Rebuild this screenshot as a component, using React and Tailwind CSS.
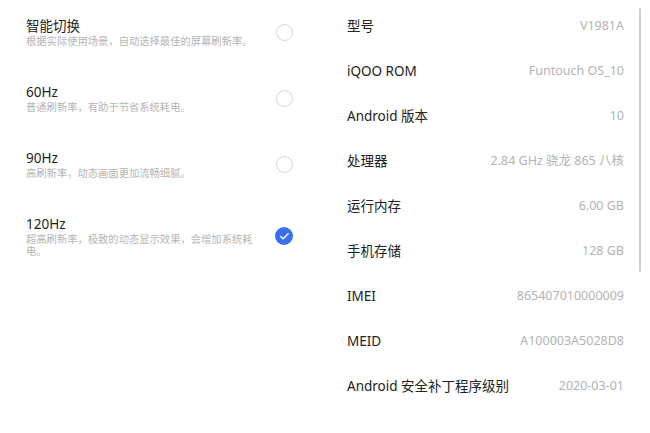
import { FiCheck } from 'react-icons/fi';

const modes = [
  { title: '智能切换', desc: '根据实际使用场景，自动选择最佳的屏幕刷新率。', checked: false },
  { title: '60Hz', desc: '普通刷新率，有助于节省系统耗电。', checked: false },
  { title: '90Hz', desc: '高刷新率，动态画面更加流畅细腻。', checked: false },
  { title: '120Hz', desc: '超高刷新率，极致的动态显示效果，会增加系统耗电。', checked: true },
];

const specs = [
  ['型号', 'V1981A'],
  ['iQOO ROM', 'Funtouch OS_10'],
  ['Android 版本', '10'],
  ['处理器', '2.84 GHz 骁龙 865 八核'],
  ['运行内存', '6.00 GB'],
  ['手机存储', '128 GB'],
  ['IMEI', '865407010000009'],
  ['MEID', 'A100003A5028D8'],
  ['Android 安全补丁程序级别', '2020-03-01'],
];

const Radio = ({ checked }) =>
  checked ? (
    <div className="w-[18px] h-[18px] rounded-full bg-[#3b6ef0] flex items-center justify-center">
      <FiCheck className="text-white w-[11px] h-[11px]" strokeWidth={3} />
    </div>
  ) : (
    <div className="w-[17px] h-[17px] rounded-full border-[1.5px] border-[#d6d6d6]" />
  );

export default function App() {
  return (
    <div
      className="w-[650px] h-[433px] bg-white flex overflow-hidden"
      style={{ fontFamily: '"Noto Sans", "Noto Sans CJK SC", sans-serif' }}
    >
      <div className="w-[325px] pl-[26px] pt-[17px] flex flex-col gap-[36px]">
        {modes.map((m) => (
          <div key={m.title} className="w-[267px] flex items-center justify-between">
            <div className="w-[236px]">
              <div className="text-[13.5px] leading-[18px] text-[#1c1c1c]">{m.title}</div>
              <div className="text-[10.3px] leading-[12px] text-[#b5b5b5]">{m.desc}</div>
            </div>
            <Radio checked={m.checked} />
          </div>
        ))}
      </div>

      <div className="relative w-[325px] pl-[22px] pr-[26px] pt-[4px]">
        {specs.map(([label, value]) => (
          <div key={label} className="h-[45px] flex items-center justify-between">
            <span className="text-[13.5px] text-[#222222]">{label}</span>
            <span className="text-[12.5px] text-[#b3b3b3]">{value}</span>
          </div>
        ))}
        <div className="absolute right-[9px] top-[8px] w-[2px] h-[264px] rounded-full bg-[#cfcfcf]" />
      </div>
    </div>
  );
}
